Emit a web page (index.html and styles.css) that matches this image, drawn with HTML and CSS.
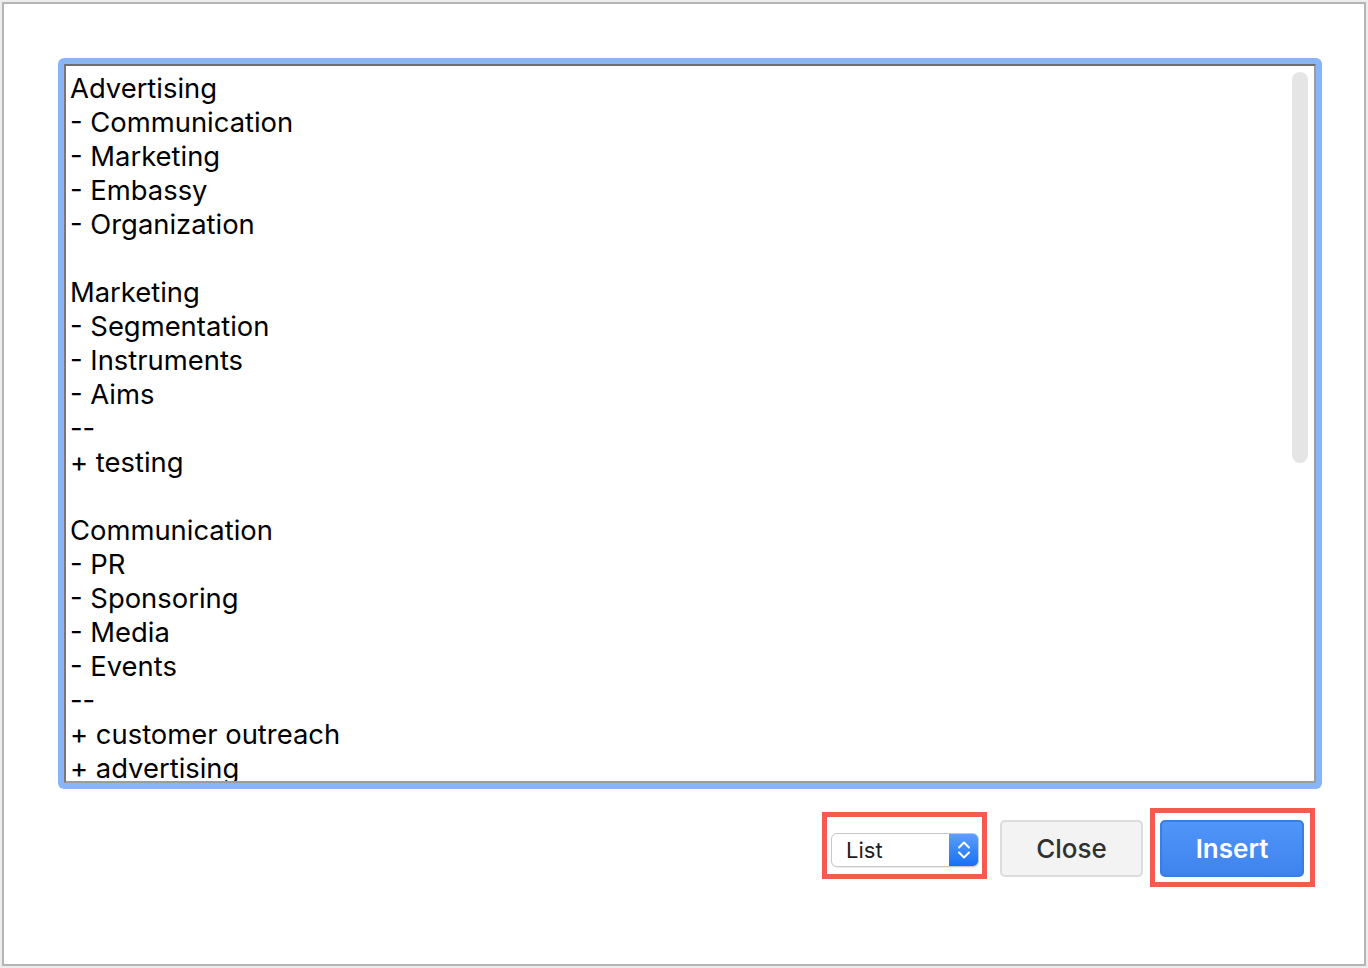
FILE: index.html
```html
<!DOCTYPE html>
<html>
<head>
<meta charset="utf-8">
<link rel="stylesheet" href="styles.css">
</head>
<body>
<div class="dialog">
  <div class="ring">
    <div class="editor">
      <div class="text">Advertising
- Communication
- Marketing
- Embassy
- Organization

Marketing
- Segmentation
- Instruments
- Aims
--
+ testing

Communication
- PR
- Sponsoring
- Media
- Events
--
+ customer outreach
+ advertising</div>
      <div class="thumb"></div>
    </div>
  </div>
  <div class="actions">
    <div class="mark mark-select">
      <div class="select">
        <span class="select-label">List</span>
        <span class="select-arrow">
          <svg width="16" height="24" viewBox="0 0 16 24"><path d="M3 9.5 L8 4.5 L13 9.5 M3 14.5 L8 19.5 L13 14.5" fill="none" stroke="#fff" stroke-width="2" stroke-linecap="round" stroke-linejoin="round"/></svg>
        </span>
      </div>
    </div>
    <button class="btn btn-close">Close</button>
    <div class="mark mark-insert">
      <button class="btn btn-insert">Insert</button>
    </div>
  </div>
</div>
</body>
</html>
```
FILE: styles.css
```css
html, body {
  margin: 0;
  padding: 0;
}
body {
  background: #ededed;
  padding: 2px;
  font-family: Inter, "Liberation Sans", sans-serif;
}
.dialog {
  box-sizing: border-box;
  width: 1364px;
  height: 964px;
  border: 2px solid #b5b5b5;
  background: #fff;
  padding: 54px 42px 0 54px;
}
.ring {
  background: #8ab4f8;
  padding: 6px;
  border-radius: 6px;
}
.editor {
  position: relative;
  box-sizing: border-box;
  height: 719px;
  border: 2px solid;
  border-color: #6f6f6f #9c9c9c #9c9c9c #777;
  background: #fff;
  overflow: hidden;
}
.text {
  white-space: pre;
  font-size: 27.4px;
  line-height: 34px;
  color: #000;
  padding: 5px 4px;
}
.thumb {
  position: absolute;
  top: 6px;
  right: 6px;
  width: 16px;
  height: 391px;
  border-radius: 8px;
  background: #e5e5e5;
}
.actions {
  display: flex;
  justify-content: flex-end;
  align-items: flex-start;
  margin-top: 19px;
  padding-right: 7px;
}
.mark {
  border: 5px solid #f25b4e;
}
.mark-select {
  margin-top: 4px;
  padding: 16px 3px 7px 4px;
  margin-right: 13px;
}
.mark-insert {
  padding: 7px 6px 5px 5px;
  margin-left: 7px;
}
.select {
  display: flex;
  box-sizing: border-box;
  width: 148px;
  height: 34px;
  border: 1px solid #c8c8c8;
  border-radius: 6px;
  background: #fff;
  box-shadow: 0 1px 1px rgba(0,0,0,0.08);
  overflow: hidden;
}
.select-label {
  flex: 1;
  padding-left: 14px;
  font-size: 22px;
  line-height: 32px;
  color: #1d1d1d;
}
.select-arrow {
  width: 29px;
  display: flex;
  align-items: center;
  justify-content: center;
  background: linear-gradient(#5b9ffa, #1670f6);
}
.btn {
  box-sizing: border-box;
  height: 57px;
  border-radius: 5px;
  font-family: Inter, "Liberation Sans", sans-serif;
  font-size: 26px;
  font-weight: 500;
  padding: 0;
  cursor: pointer;
}
.btn-close {
  margin-top: 12px;
  width: 143px;
  background: #f3f3f3;
  border: 2px solid #dcdcdc;
  color: #303030;
}
.btn-insert {
  display: block;
  width: 144px;
  background: linear-gradient(#5095f8, #3f83ee);
  border: 2px solid #3b7de6;
  color: #fff;
  font-weight: 600;
}
```
